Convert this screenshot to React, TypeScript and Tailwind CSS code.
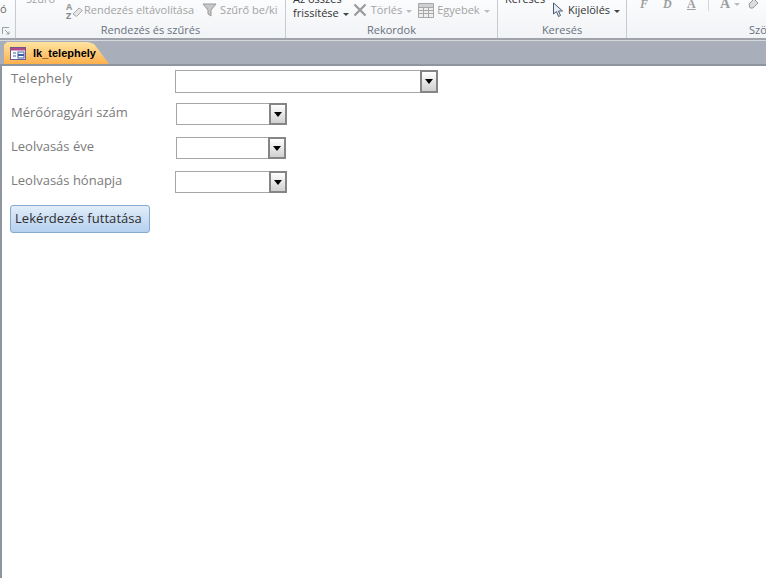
import { ReactNode } from 'react';

const font = 'font-["Open_Sans","Noto_Sans",sans-serif]';

const Caret = ({ dark = false }: { dark?: boolean }) => (
  <span className={`ml-1 inline-block h-0 w-0 border-x-[3px] border-t-[3px] border-x-transparent align-middle ${dark ? 'border-t-[#444]' : 'border-t-[#bbb]'}`} />
);

const Group = ({ width, label, children }: { width: string; label: string; children: ReactNode }) => (
  <div className={`${width} flex h-full shrink-0 flex-col border-r border-[#c6cbd1]`}>
    <div className="min-h-0 flex-1 overflow-hidden">{children}</div>
    <div className="text-center text-[11px] leading-[16px] text-[#69717d]">{label}</div>
  </div>
);

const Combo = ({ className }: { className: string }) => (
  <div className={`${className} flex border border-[#a6a6a6] bg-white`}>
    <div className="ml-auto -my-px -mr-px flex w-[18px] items-center justify-center border-2 border-[#858585] bg-gradient-to-b from-white to-[#d0d0d0]">
      <span className="h-0 w-0 border-x-[4px] border-t-[5px] border-x-transparent border-t-black" />
    </div>
  </div>
);

const Field = ({ label, tracking = '', children }: { label: string; tracking?: string; children: ReactNode }) => (
  <div className="flex h-[34px] items-start">
    <div className={`w-[172px] pl-[8px] text-[13px] leading-[18px] text-[#7b7b7b] ${tracking}`}>{label}</div>
    {children}
  </div>
);

export default function App() {
  return (
    <div className={`${font} flex h-[578px] w-[766px] flex-col overflow-hidden bg-white`}>
      {/* ribbon, scrolled off at the top */}
      <div className="flex h-[40px] shrink-0 border-b-2 border-[#a0a4aa] bg-gradient-to-b from-[#fbfcfd] to-[#f1f3f6]">
        <div className="flex h-full w-[16px] shrink-0 flex-col border-r border-[#c6cbd1]">
          <div className="h-[21px] pt-[2px] text-[11px] leading-[14px] text-[#666]">ó</div>
          <svg className="ml-[2px] mt-[6px]" width="8" height="8" viewBox="0 0 8 8">
            <path d="M0.5 7V0.5H7M3 3l4 4M7 4.5V7H4.5" fill="none" stroke="#9a9fa6" />
          </svg>
        </div>
        <Group width="w-[270px]" label="Rendezés és szűrés">
          <div className="relative flex items-start text-[11px] leading-[14px] text-[#a3a3a3]">
            <span className="absolute left-[10px] -top-[8px]">Szűrő</span>
            <svg className="ml-[49px] mt-[2px] shrink-0" width="18" height="17" viewBox="0 0 18 17">
              <text x="1" y="8" fontSize="9" fontWeight="700" fill="#999">A</text>
              <text x="1" y="17" fontSize="9" fontWeight="700" fill="#888">Z</text>
              <path d="M8 12l6-6 3.5 2.5-6 6z" fill="#e6e6e6" stroke="#aaa" />
            </svg>
            <span className="ml-[1px] mt-[3px] whitespace-nowrap">Rendezés eltávolítása</span>
            <svg className="ml-[8px] mt-[3px] shrink-0" width="15" height="14" viewBox="0 0 15 14">
              <path d="M1 1h13L9 7v6L6 11V7z" fill="#c8c8c8" stroke="#999" />
            </svg>
            <span className="ml-[3px] mt-[3px] whitespace-nowrap">Szűrő be/ki</span>
          </div>
        </Group>
        <Group width="w-[212px]" label="Rekordok">
          <div className="relative flex items-start text-[11px] leading-[14px]">
            <div className="ml-[7px] flex flex-col whitespace-nowrap text-[#333]">
              <span className="-mt-[8px]">Az összes</span>
              <span>frissítése<Caret dark /></span>
            </div>
            <svg className="ml-[4px] mt-[3px] shrink-0" width="14" height="14" viewBox="0 0 14 14">
              <path d="M1.5 1.5l11 11M12.5 1.5l-11 11" stroke="#9a9a9a" strokeWidth="2.2" />
            </svg>
            <span className="ml-[4px] mt-[3px] whitespace-nowrap text-[#a3a3a3]">Törlés<Caret /></span>
            <svg className="ml-[6px] mt-[2px] shrink-0" width="16" height="16" viewBox="0 0 16 16">
              <path d="M0.5 1.5h15v14h-15zM0.5 5.5h15M0.5 8.5h15M0.5 11.5h15M5.5 5.5v10M10.5 5.5v10" fill="#eee" stroke="#a8a8a8" />
              <rect x="1" y="2" width="14" height="3" fill="#d0d0d0" />
            </svg>
            <span className="ml-[3px] mt-[3px] whitespace-nowrap text-[#a3a3a3]">Egyebek<Caret /></span>
          </div>
        </Group>
        <Group width="w-[129px]" label="Keresés">
          <div className="relative flex items-start text-[11px] leading-[14px] text-[#333]">
            <span className="absolute left-[7px] -top-[8px]">Keresés</span>
            <svg className="ml-[54px] mt-[2px] shrink-0" width="12" height="16" viewBox="0 0 12 16">
              <path d="M1.5 1v11l3-2.5 2 5 2-1-2-4.5h4z" fill="#e8eef6" stroke="#4a5a70" />
            </svg>
            <span className="ml-[4px] mt-[3px] whitespace-nowrap">Kijelölés<Caret dark /></span>
          </div>
        </Group>
        <div className="flex h-full flex-1 flex-col overflow-hidden">
          <div className="relative min-h-0 flex-1 overflow-hidden font-['Liberation_Serif',serif] text-[12px] font-bold leading-[12px] text-[#a0a0a0]">
            <div className="absolute -top-[3px] left-[13px] flex items-center whitespace-nowrap">
              <span className="w-[23px] italic">F</span>
              <span className="w-[24px] italic">D</span>
              <span className="w-[21px] underline">A</span>
              <span className="mr-[11px] h-[14px] w-px bg-[#d4d6da]" />
              <span className="text-[14px]">A</span>
              <Caret />
              <svg className="ml-[7px]" width="14" height="12" viewBox="0 0 14 12">
                <path d="M2 6l5-5 4 4-5 5H3z" fill="#ddd" stroke="#999" />
              </svg>
            </div>
          </div>
          <div className="whitespace-nowrap pl-[122px] text-[11px] leading-[16px] text-[#69717d]">Szö</div>
        </div>
      </div>

      {/* document tab strip */}
      <div className="flex h-[26px] shrink-0 items-end border-t border-b-2 border-t-[#d6d9de] border-b-[#8f959e] bg-[#a9afba] pl-[4px]">
        <div className="flex h-[22px] w-[105px] items-center bg-gradient-to-b from-[#fde3a0] to-[#fdb04a] pl-[6px] [clip-path:polygon(0_3px,3px_0,84px_0,90px_2px,94px_7px,100%_100%,0_100%)]">
          <svg width="16" height="13" viewBox="0 0 16 13">
            <rect x="0.5" y="0.5" width="15" height="12" fill="#fff" stroke="#6a5a90" />
            <rect x="1" y="1" width="14" height="2.5" fill="#b04a8a" />
            <path d="M3 6h3M3 9h3" stroke="#3a5fa8" />
            <rect x="8" y="5" width="6" height="2.5" fill="#fff" stroke="#3a5fa8" />
            <rect x="8" y="8.5" width="6" height="2.5" fill="#fff" stroke="#3a5fa8" />
          </svg>
          <span className="ml-[7px] font-['Liberation_Sans',sans-serif] text-[11px] font-bold text-black">lk_telephely</span>
        </div>
      </div>

      {/* form body */}
      <div className="flex-1 border-l-2 border-[#8f959e] pl-px pt-[3px]">
        <Field label="Telephely" tracking="tracking-[0.4px]"><Combo className="mt-px h-[23px] w-[263px]" /></Field>
        <Field label="Mérőóragyári szám"><Combo className="ml-px h-[22px] w-[111px]" /></Field>
        <Field label="Leolvasás éve"><Combo className="ml-px h-[22px] w-[110px]" /></Field>
        <Field label="Leolvasás hónapja"><Combo className="h-[22px] w-[112px]" /></Field>
        <button className="ml-[7px] block h-[28px] w-[140px] rounded-[3px] border border-[#86a9cf] bg-gradient-to-b from-[#e2edf9] to-[#b5d0ef] pl-[4px] text-left text-[13px] tracking-[0.05px] text-[#2d2d2d]">
          Lekérdezés futtatása
        </button>
      </div>
    </div>
  );
}
